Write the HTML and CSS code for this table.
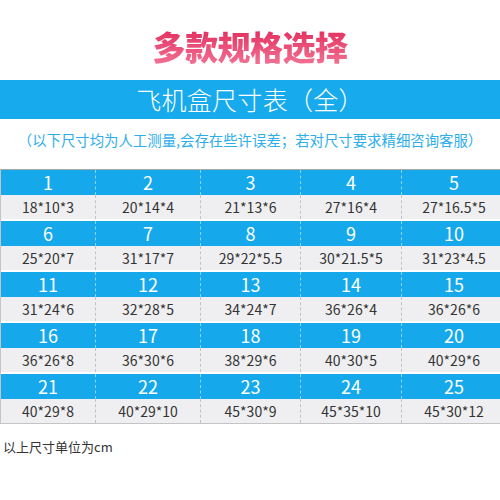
FILE: index.html
```html
<!DOCTYPE html>
<html lang="zh-CN">

<head>
    <meta charset="UTF-8">
    <meta name="viewport" content="width=device-width, initial-scale=1.0">
    <title>飞机盒尺寸表</title>
    <link rel="stylesheet" href="styles.css">
</head>

<body>
    <div class="page">
        <h1 class="title">多款规格选择</h1>
        <div class="banner">飞机盒尺寸表（全）</div>
        <p class="note">（以下尺寸均为人工测量,会存在些许误差；若对尺寸要求精细咨询客服）</p>

        <div class="table">
            <div class="group">
                <div class="num">1</div><div class="num">2</div><div class="num">3</div><div class="num">4</div><div class="num">5</div>
                <div class="size">18*10*3</div><div class="size">20*14*4</div><div class="size">21*13*6</div><div class="size">27*16*4</div><div class="size">27*16.5*5</div>
            </div>
            <div class="group">
                <div class="num">6</div><div class="num">7</div><div class="num">8</div><div class="num">9</div><div class="num">10</div>
                <div class="size">25*20*7</div><div class="size">31*17*7</div><div class="size">29*22*5.5</div><div class="size">30*21.5*5</div><div class="size">31*23*4.5</div>
            </div>
            <div class="group">
                <div class="num">11</div><div class="num">12</div><div class="num">13</div><div class="num">14</div><div class="num">15</div>
                <div class="size">31*24*6</div><div class="size">32*28*5</div><div class="size">34*24*7</div><div class="size">36*26*4</div><div class="size">36*26*6</div>
            </div>
            <div class="group">
                <div class="num">16</div><div class="num">17</div><div class="num">18</div><div class="num">19</div><div class="num">20</div>
                <div class="size">36*26*8</div><div class="size">36*30*6</div><div class="size">38*29*6</div><div class="size">40*30*5</div><div class="size">40*29*6</div>
            </div>
            <div class="group">
                <div class="num">21</div><div class="num">22</div><div class="num">23</div><div class="num">24</div><div class="num">25</div>
                <div class="size">40*29*8</div><div class="size">40*29*10</div><div class="size">45*30*9</div><div class="size">45*35*10</div><div class="size">45*30*12</div>
            </div>
        </div>

        <p class="unit">以上尺寸单位为cm</p>
    </div>
</body>

</html>
```

FILE: styles.css
```css
body {
    margin: 0;
    background-color: #fff;
    font-family: "Noto Sans CJK SC", "Noto Sans", sans-serif;
    overflow: hidden;
}

.page {
    width: 500px;
    overflow: hidden;
}

.title {
    margin: 26px 0 0;
    height: 40px;
    line-height: 40px;
    text-align: center;
    font-size: 33px;
    font-weight: 900;
    letter-spacing: -0.5px;
    background: linear-gradient(#e2285a, #f27596);
    -webkit-background-clip: text;
    background-clip: text;
    color: transparent;
}

.banner {
    margin-top: 14px;
    height: 39px;
    line-height: 39px;
    background-color: #17aaec;
    color: #fff;
    text-align: center;
    font-size: 25px;
    font-weight: 200;
    letter-spacing: 0.3px;
}

.note {
    margin: 12px 0 20px;
    height: 18px;
    line-height: 18px;
    text-align: center;
    color: #2daeea;
    font-size: 14.4px;
    white-space: nowrap;
}

.table {
    width: 506px;
    border-top: 1px solid #a8a8a8;
    border-left: 1px solid #c4c4c4;
    border-bottom: 1px solid #c4c4c4;
    display: flex;
    flex-direction: column;
    gap: 2px;
}

.group {
    display: grid;
    grid-template-columns: 94px 105px 100px 101px 105px;
    grid-template-rows: 25px 24px;
}

.num,
.size {
    text-align: center;
    border-left: 1px dashed #c2c2c2;
}

.num:first-child,
.size:nth-child(6) {
    border-left: none;
}

.num {
    background-color: #15a9ec;
    color: #fff;
    font-size: 18px;
    line-height: 25px;
    border-left-color: #8fd2f3;
}

.size {
    background-color: #efeff1;
    color: #333;
    font-size: 14px;
    line-height: 24px;
}

.unit {
    margin: 13px 0 0 3px;
    font-size: 13px;
    line-height: 20px;
    color: #333;
}
```
